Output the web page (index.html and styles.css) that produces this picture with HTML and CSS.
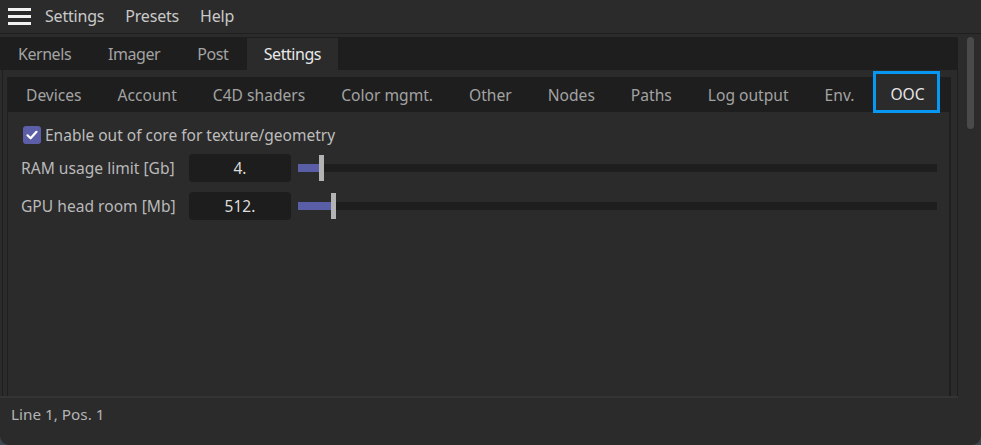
FILE: index.html
```html
<!DOCTYPE html>
<html>
<head>
<meta charset="utf-8">
<link rel="stylesheet" href="styles.css">
</head>
<body>
<div class="app">
  <div class="menubar">
    <div class="burger"><span></span><span></span><span></span></div>
    <div class="menu-item">Settings</div>
    <div class="menu-item">Presets</div>
    <div class="menu-item">Help</div>
  </div>
  <div class="body">
    <div class="main">
      <div class="tabbar">
        <div class="tab">Kernels</div>
        <div class="tab">Imager</div>
        <div class="tab">Post</div>
        <div class="tab active">Settings</div>
      </div>
      <div class="panel">
        <div class="inner">
          <div class="subtabs">
            <div class="subtab">Devices</div>
            <div class="subtab">Account</div>
            <div class="subtab">C4D shaders</div>
            <div class="subtab">Color mgmt.</div>
            <div class="subtab">Other</div>
            <div class="subtab">Nodes</div>
            <div class="subtab">Paths</div>
            <div class="subtab">Log output</div>
            <div class="subtab">Env.</div>
            <div class="subtab active">OOC</div>
          </div>
          <div class="content">
            <label class="check-row">
              <span class="checkbox"><svg width="14" height="14" viewBox="0 0 14 14"><path d="M2.5 7.3 L5.6 10.3 L11.5 3.8" fill="none" stroke="#fff" stroke-width="2.2" stroke-linecap="round" stroke-linejoin="round"/></svg></span>
              <span class="check-label">Enable out of core for texture/geometry</span>
            </label>
            <div class="row">
              <div class="row-label">RAM usage limit [Gb]</div>
              <div class="numbox">4.</div>
              <div class="slider">
                <div class="fill" style="width:21px"></div>
                <div class="handle"></div>
              </div>
            </div>
            <div class="row">
              <div class="row-label">GPU head room [Mb]</div>
              <div class="numbox">512.</div>
              <div class="slider">
                <div class="fill" style="width:33px"></div>
                <div class="handle"></div>
              </div>
            </div>
          </div>
        </div>
      </div>
      <div class="statusbar">Line 1, Pos. 1</div>
    </div>
    <div class="scrolllane"><div class="thumb"></div></div>
  </div>
</div>
</body>
</html>
```

FILE: styles.css
```css
* { box-sizing: border-box; }
html, body { margin: 0; padding: 0; }
body {
  width: 981px;
  height: 445px;
  background: #3d4750;
  font-family: "Noto Sans", "Open Sans", sans-serif;
  font-size: 15px;
  overflow: hidden;
}
.app {
  width: 981px;
  height: 445px;
  background: #2b2b2b;
  border-radius: 0 0 9px 9px;
  display: flex;
  flex-direction: column;
  overflow: hidden;
}
.menubar {
  height: 34px;
  flex: none;
  display: flex;
  align-items: center;
  border-bottom: 1px solid #1f1f1f;
  padding-left: 8px;
  padding-bottom: 1px;
}
.burger {
  width: 23px;
  height: 17px;
  display: flex;
  flex-direction: column;
  justify-content: space-between;
  margin-right: 14px;
}
.burger span {
  display: block;
  height: 3px;
  background: #f2f2f2;
}
.menu-item {
  color: #c9c9c9;
  font-size: 16px;
  margin-right: 21px;
  letter-spacing: -0.2px;
}
.body {
  flex: 1;
  display: flex;
  padding-top: 3px;
  min-height: 0;
}
.main {
  width: 958px;
  display: flex;
  flex-direction: column;
}
.tabbar {
  height: 33px;
  flex: none;
  background: #1e1e1e;
  display: flex;
  padding-top: 1px;
}
.tab {
  padding: 0 18.5px;
  color: #a3a3a3;
  font-size: 16px;
  letter-spacing: -0.45px;
  display: flex;
  align-items: center;
}
.tab:first-child { padding-left: 18px; }
.tab.active {
  background: #2b2b2b;
  color: #e8e8e8;
  padding: 0 17px;
}
.panel {
  flex: 1;
  margin-left: 2px;
  border-left: 1px solid #1f1f1f;
  border-right: 1px solid #1f1f1f;
  padding: 7px 6px 0 4px;
  display: flex;
  min-height: 0;
}
.inner {
  flex: 1;
  border-left: 1px solid #1f1f1f;
  border-right: 2px solid #1f1f1f;
  display: flex;
  flex-direction: column;
}
.subtabs {
  height: 35px;
  flex: none;
  background: #1e1e1e;
  display: flex;
  margin-right: -2px;
}
.subtab {
  padding: 0 18px;
  color: #a3a3a3;
  font-size: 15.6px;
  letter-spacing: 0;
  display: flex;
  align-items: center;
  padding-top: 0;
}
.subtab.active {
  align-self: flex-start;
  height: 42px;
  margin-top: -6px;
  margin-left: 1px;
  border: 3px solid #0898f3;
  background: #2b2b2b;
  color: #e4e4e4;
  padding: 4px 12px 0 14px;
}
.content {
  padding: 13px 0 0 13px;
}
.check-row {
  display: flex;
  align-items: center;
  height: 19px;
  margin-left: 2px;
}
.checkbox {
  width: 18px;
  height: 18px;
  border-radius: 3px;
  background: #5c5fa8;
  display: flex;
  align-items: center;
  justify-content: center;
  margin-right: 4px;
}
.check-label {
  color: #bdbdbd;
  font-size: 15.5px;
  letter-spacing: 0;
}
.row {
  display: flex;
  align-items: center;
  height: 28px;
  margin-top: 10px;
}
.row + .row { margin-top: 10px; }
.row-label {
  width: 168px;
  color: #b9b9b9;
  font-size: 15.6px;
  letter-spacing: 0;
}
.numbox {
  width: 102px;
  height: 28px;
  background: #1d1d1d;
  border-radius: 4px;
  color: #dcdcdc;
  font-size: 15.5px;
  display: flex;
  align-items: center;
  justify-content: center;
  margin-right: 7px;
}
.slider {
  position: relative;
  width: 639px;
  height: 8px;
  background: #1e1e1e;
  display: flex;
}
.fill {
  height: 8px;
  background: #5a5ea6;
}
.handle {
  width: 5px;
  height: 26px;
  margin-top: -9px;
  background: #b3b3b3;
}
.statusbar {
  height: 49px;
  flex: none;
  border-top: 2px solid #343434;
  color: #b4b4b4;
  font-size: 15.3px;
  padding: 6px 0 0 11px;
}
.scrolllane {
  flex: 1;
  padding: 0 0 0 9px;
}
.thumb {
  width: 7px;
  height: 92px;
  border-radius: 4px;
  background: #4a4a4a;
}
```
